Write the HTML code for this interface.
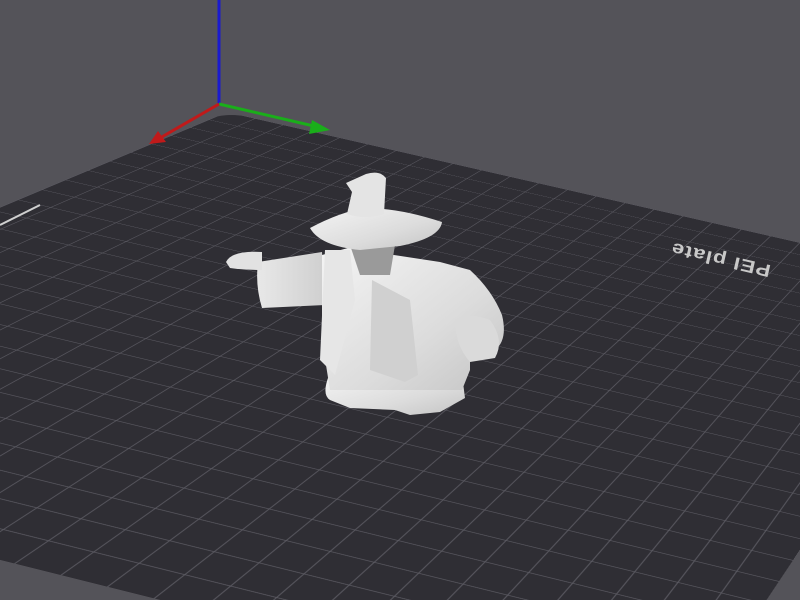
<!DOCTYPE html>
<html><head><meta charset="utf-8"><style>
html,body{margin:0;padding:0;background:#545359;overflow:hidden;width:800px;height:600px}
#wrap{position:relative;width:800px;height:600px;overflow:hidden;background:#545359}
#plate{position:absolute;left:0;top:0;width:1040px;height:1040px;transform-origin:0 0;
background-color:#2f2e34;
background-image:linear-gradient(to right,#5c5b63 0,#5c5b63 1.3px,transparent 1.3px),linear-gradient(to bottom,#5c5b63 0,#5c5b63 1.3px,transparent 1.3px);
background-size:40px 40px;background-position:0 0;
border-top-left-radius:30px;
transform:matrix3d(0.6912,0.15573,0,-0.00003072,-0.52913,0.14481,0,-0.00037163,0,0,1,0,227,112,0,1);}
svg{position:absolute;left:0;top:0;display:block}
</style></head><body>
<div id="wrap">
<div id="plate"></div>
<svg width="800" height="600" viewBox="0 0 800 600" xmlns="http://www.w3.org/2000/svg">
<defs>
<linearGradient id="w" x1="0" y1="0" x2="1" y2="1">
<stop offset="0" stop-color="#f4f4f4"/><stop offset="0.6" stop-color="#dcdcdc"/><stop offset="1" stop-color="#c4c4c4"/>
</linearGradient>
<linearGradient id="w2" x1="0" y1="0" x2="1" y2="0">
<stop offset="0" stop-color="#e8e8e8"/><stop offset="1" stop-color="#cfcfcf"/>
</linearGradient>
</defs>
<path d="M40,205 L0,225" stroke="#d0d0d0" stroke-width="2"/>
<text x="0" y="0" transform="translate(722,254) rotate(193) scale(1,0.8)" text-anchor="middle" font-family="Liberation Sans, sans-serif" font-weight="bold" font-size="22" fill="#c8c8c8" letter-spacing="1">PEI plate</text>
<line x1="219" y1="0" x2="219" y2="104" stroke="#1a1ad0" stroke-width="3"/>
<line x1="219" y1="104" x2="318" y2="127" stroke="#1aae1a" stroke-width="3"/>
<polygon points="330,130 312,120 309,134" fill="#1aae1a"/>
<line x1="219" y1="104" x2="160" y2="138" stroke="#c01a1a" stroke-width="3"/>
<polygon points="149,144 158,131 166,142" fill="#c01a1a"/>
<g>
<path d="M328,378 Q322,395 330,400 L350,408 L395,410 L410,415 L440,412 L465,398 L462,375 Z" fill="url(#w)"/>
<path d="M258,262 L322,252 L325,305 L262,308 Q255,285 258,262 Z" fill="url(#w2)"/>
<path d="M226,262 Q232,250 262,252 L262,270 Q244,270 230,268 Z" fill="#e2e2e2"/>
<path d="M322,255 L348,248 L440,262 L470,270 Q492,290 502,315 Q508,340 495,350 L470,345 L470,370 L462,390 L330,390 L322,340 Z" fill="url(#w)"/>
<path d="M325,250 L350,250 L355,300 L335,375 L320,360 Z" fill="#e6e6e6"/>
<path d="M372,280 L410,300 L418,375 L405,382 L370,370 Z" fill="#d0d0d0"/>
<path d="M455,320 Q470,312 490,320 Q505,340 495,358 L470,362 Q455,345 455,320 Z" fill="#dadada"/>
<path d="M350,245 L395,245 L390,275 L360,275 Z" fill="#9a9a9a"/>
<path d="M310,228 Q340,212 365,208 Q400,208 442,222 Q440,238 400,246 L360,250 Q320,246 310,228 Z" fill="url(#w)"/>
<path d="M347,214 L352,192 L346,183 L366,174 Q380,170 386,178 L384,214 Q365,220 347,214 Z" fill="#e4e4e4"/>
</g>
</svg>
</div>
</body></html>
